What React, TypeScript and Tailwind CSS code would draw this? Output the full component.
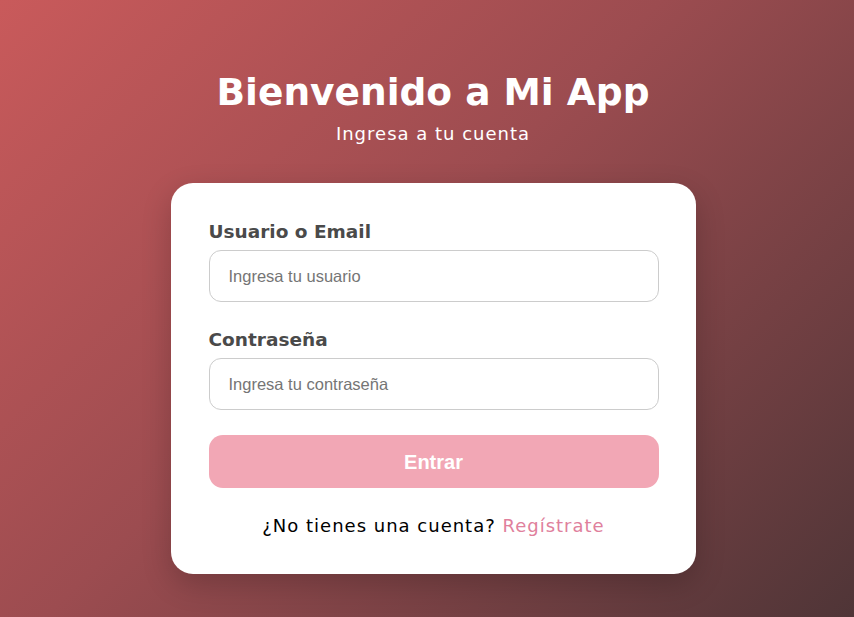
export default function App() {
  return (
    <div
      className="flex min-h-screen w-full flex-col items-center bg-[linear-gradient(135deg,#c95a5b_0%,#9c4c50_45%,#4f3537_100%)] pt-[65px] pl-[12px]"
      style={{ fontFamily: '"DejaVu Sans", "Noto Sans", sans-serif' }}
    >
      {/* Header */}
      <h1 className="text-[37.5px] leading-[54px] font-bold text-white">Bienvenido a Mi App</h1>
      <p className="mt-[3px] text-[18px] leading-[24px] tracking-[1px] text-white">Ingresa a tu cuenta</p>

      {/* Card */}
      <div className="mt-[37px] w-[525px] rounded-[22px] bg-white pl-[38px] pr-[37px] pt-[37px] pb-[35px] shadow-[0_10px_30px_rgba(0,0,0,0.2)]">
        <label className="block text-[18.5px] leading-[24px] font-bold text-[#4a4a4a]">Usuario o Email</label>
        <input
          type="text"
          placeholder="Ingresa tu usuario"
          className="mt-[6px] block h-[52px] w-full rounded-[12px] border border-[#cccccc] px-[19px] text-[16.5px] text-[#333] outline-none placeholder:text-[#757575]"
          style={{ fontFamily: '"Liberation Sans", Arial, sans-serif' }}
        />

        <label className="mt-[26px] block text-[18.5px] leading-[24px] font-bold text-[#4a4a4a]">Contraseña</label>
        <input
          type="password"
          placeholder="Ingresa tu contraseña"
          className="mt-[6px] block h-[52px] w-full rounded-[12px] border border-[#cccccc] px-[19px] text-[16.5px] text-[#333] outline-none placeholder:text-[#757575]"
          style={{ fontFamily: '"Liberation Sans", Arial, sans-serif' }}
        />

        <button
          className="mt-[25px] block h-[53px] w-full rounded-[14px] bg-[#f2a7b5] text-[20px] font-bold text-white"
          style={{ fontFamily: '"Liberation Sans", Arial, sans-serif' }}
        >
          Entrar
        </button>

        <p className="mt-[25px] text-center text-[18px] leading-[26px] tracking-[1px] text-black">
          ¿No tienes una cuenta? <a className="text-[#e0809c]">Regístrate</a>
        </p>
      </div>
    </div>
  );
}
